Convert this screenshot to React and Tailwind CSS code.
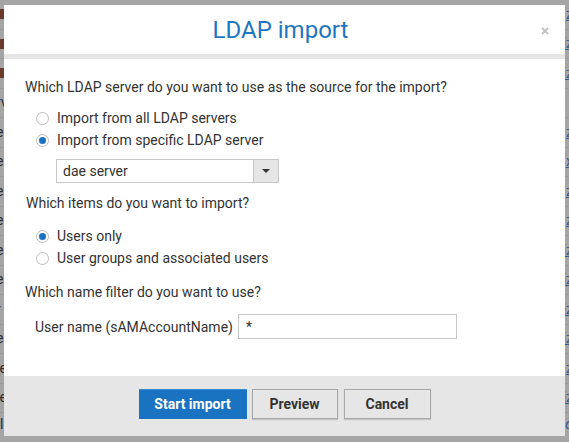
import React from 'react';

const rows = [
  { left: 'bar', right: 'z' },
  { left: 'bar', right: 'iz' },
  { left: 'bar', right: 'iz' },
  { left: 'rv', right: '' },
  { left: 'e', right: 'z' },
  { left: 'e', right: 'x' },
  { left: 'e', right: 'z' },
  { left: 'e', right: 'z' },
  { left: 'e', right: 'iz' },
  { left: 'e', right: 'iz' },
  { left: 'r', right: 'iz' },
  { left: 'e', right: 'iz' },
  { left: 'le', right: 'z' },
  { left: 'le', right: 'iz' },
];

const Radio = ({ checked, label }) => (
  <label className="flex items-center gap-[8px] h-[20px] ml-[11px] text-[14px] text-[#333]">
    <span className="w-[13px] h-[13px] rounded-full border border-[#bdbdbd] bg-white flex items-center justify-center shrink-0">
      {checked && <span className="w-[7px] h-[7px] rounded-full bg-[#1a73c0]" />}
    </span>
    <span>{label}</span>
  </label>
);

export default function App() {
  return (
    <div className="relative w-[569px] h-[442px] overflow-hidden bg-[#a5a5a5] font-['Roboto',sans-serif]">
      {/* page behind the dialog */}
      <div className="flex flex-col">
        {rows.map((r, i) => (
          <div key={i} className="h-[29.5px] border-b border-[#9b9b9b] flex items-center justify-between text-[14px]">
            {r.left === 'bar' ? (
              <span className="ml-[-2px] w-[6px] h-[10px] bg-[#6b3a2c]" />
            ) : (
              <span className="ml-[-4px] text-[#2f2f2f]">{r.left}</span>
            )}
            <span className="mr-[-4px] text-[#2c5d94] underline">{r.right}</span>
          </div>
        ))}
        <div className="h-[29px] flex items-start justify-between text-[14px] pt-[1px]">
          <span className="text-[#2f2f2f]">lower</span>
          <span className="mr-[-4px] italic text-[#2c5d94]">name@sd</span>
        </div>
      </div>

      {/* dialog */}
      <div className="absolute left-[4px] top-[5px] w-[561px] h-[431px] bg-white flex flex-col">
        <div className="relative h-[49px] flex items-center justify-center pr-[8px]">
          <h1 className="text-[24px] text-[#1f76c2]">LDAP import</h1>
          <svg className="absolute right-[16px] top-[22px]" width="8" height="8" viewBox="0 0 8 8">
            <path d="M1 1L7 7M7 1L1 7" stroke="#c2c2c2" strokeWidth="2" />
          </svg>
        </div>
        <div className="h-[5px] bg-[#e5e5e5]" />

        <div className="flex-1 px-[21px] pt-[18px] text-[14px] text-[#333] leading-[20px]">
          <p className="h-[20px]">Which LDAP server do you want to use as the source for the import?</p>
          <div className="mt-[11px] flex flex-col gap-[2px]">
            <Radio label="Import from all LDAP servers" />
            <Radio checked label="Import from specific LDAP server" />
          </div>
          <div className="mt-[9px] ml-[31px] w-[223px] h-[24px] border border-[#c8c8c8] flex">
            <span className="flex-1 pl-[6px] leading-[22px]">dae server</span>
            <span className="w-[25px] border-l border-[#c8c8c8] bg-[#e6e6e6] flex items-center justify-center">
              <svg width="8" height="4" viewBox="0 0 8 4">
                <path d="M0 0H8L4 4Z" fill="#333" />
              </svg>
            </span>
          </div>

          <p className="mt-[10px] h-[20px] ml-[1px]">Which items do you want to import?</p>
          <div className="mt-[13px] flex flex-col gap-[2px]">
            <Radio checked label="Users only" />
            <Radio label="User groups and associated users" />
          </div>

          <p className="mt-[14px] h-[20px]">Which name filter do you want to use?</p>
          <div className="mt-[12px] flex items-center ml-[10px] gap-[5px]">
            <span>User name (sAMAccountName)</span>
            <input
              readOnly
              value="*"
              className="w-[219px] h-[25px] border border-[#c8c8c8] px-[7px] text-[14px] text-[#333] outline-none"
            />
          </div>
        </div>

        <div className="h-[60px] bg-[#e6e6e6] flex justify-center gap-[5px] pt-[13px]">
          <button className="w-[108px] h-[30px] bg-[#1a73c0] border-t border-[#3a8ad0] text-white font-bold text-[14px]">
            Start import
          </button>
          <button className="w-[86px] h-[30px] bg-[#e6e6e6] border border-[#a8a8a8] shadow-[0_1px_1px_rgba(0,0,0,0.15)] text-[#333] font-bold text-[14px]">
            Preview
          </button>
          <button className="w-[87px] h-[30px] ml-[1px] bg-[#e6e6e6] border border-[#a8a8a8] shadow-[0_1px_1px_rgba(0,0,0,0.15)] text-[#333] font-bold text-[14px]">
            Cancel
          </button>
        </div>
      </div>
    </div>
  );
}
